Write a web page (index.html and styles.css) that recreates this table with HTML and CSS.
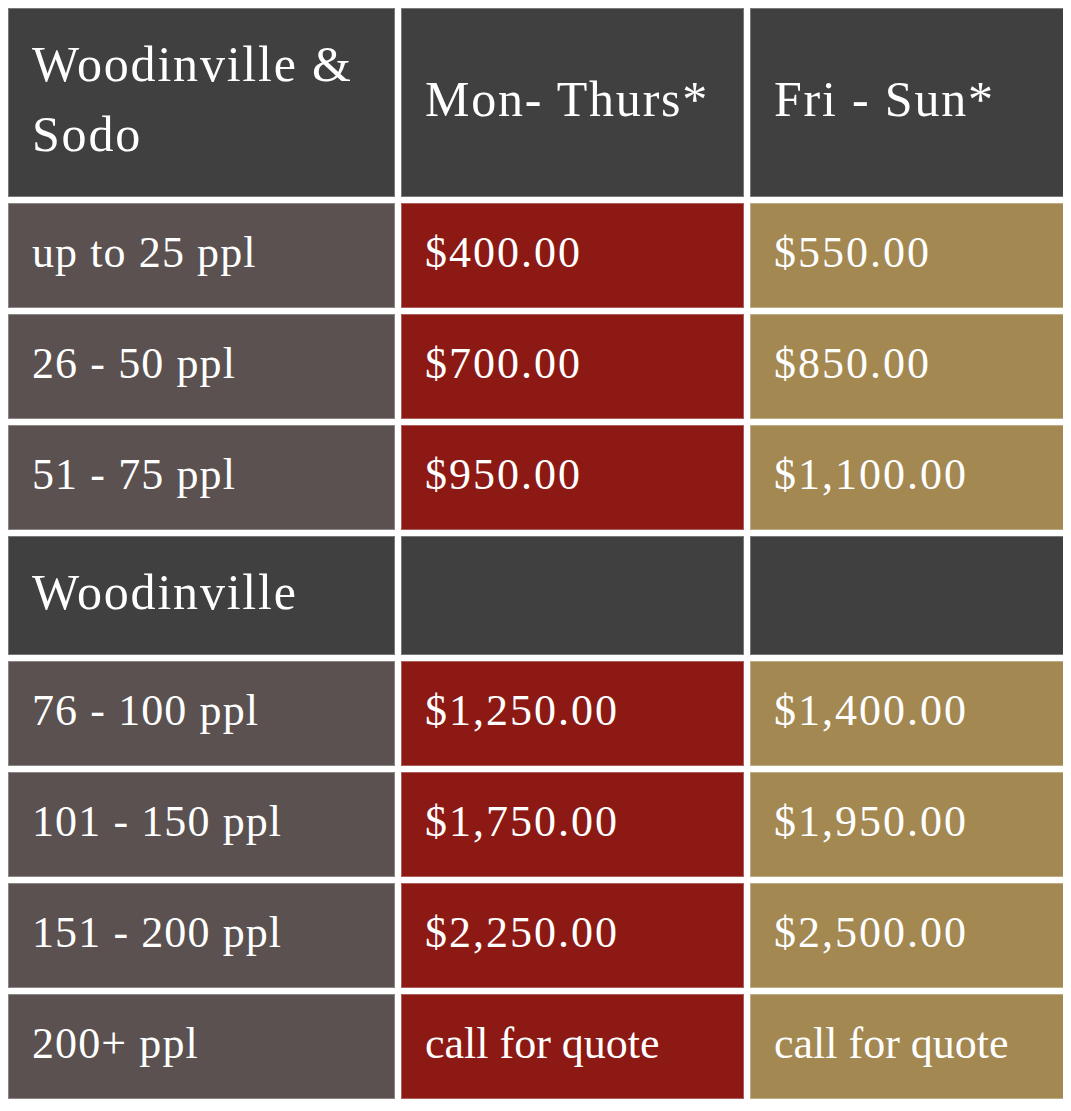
FILE: index.html
```html
<!DOCTYPE html>
<html lang="en">
<head>
<meta charset="utf-8">
<title>Pricing</title>
<link rel="stylesheet" href="styles.css">
</head>
<body>
<div class="price-table">
  <div class="cell head">Woodinville &amp; Sodo</div>
  <div class="cell head">Mon- Thurs*</div>
  <div class="cell head">Fri - Sun*</div>

  <div class="cell label">up to 25 ppl</div>
  <div class="cell weekday">$400.00</div>
  <div class="cell weekend">$550.00</div>

  <div class="cell label">26 - 50 ppl</div>
  <div class="cell weekday">$700.00</div>
  <div class="cell weekend">$850.00</div>

  <div class="cell label">51 - 75 ppl</div>
  <div class="cell weekday">$950.00</div>
  <div class="cell weekend">$1,100.00</div>

  <div class="cell head">Woodinville</div>
  <div class="cell head"></div>
  <div class="cell head"></div>

  <div class="cell label">76 - 100 ppl</div>
  <div class="cell weekday">$1,250.00</div>
  <div class="cell weekend">$1,400.00</div>

  <div class="cell label">101 - 150 ppl</div>
  <div class="cell weekday">$1,750.00</div>
  <div class="cell weekend">$1,950.00</div>

  <div class="cell label">151 - 200 ppl</div>
  <div class="cell weekday">$2,250.00</div>
  <div class="cell weekend">$2,500.00</div>

  <div class="cell label">200+ ppl</div>
  <div class="cell weekday quote">call for quote</div>
  <div class="cell weekend quote">call for quote</div>
</div>
</body>
</html>
```

FILE: styles.css
```css
html, body {
  background: #ffffff;
}
body {
  margin: 8px;
  font-family: "Liberation Serif", "Times New Roman", serif;
}
.price-table {
  display: grid;
  grid-template-columns: 387px 343px 317px;
  grid-template-rows: 189px 105px 105px 105px 119px 105px 105px 105px 105px;
  gap: 6px;
  width: 1059px;
}
.cell {
  display: flex;
  align-items: center;
  padding: 0 20px 5px 24px;
  color: #ffffff;
  font-size: 44px;
  letter-spacing: 2px;
  line-height: 1.2;
  box-shadow: inset 0 0 0 1px rgba(255, 255, 255, 0.3);
  box-sizing: border-box;
}
.head {
  background: #404040;
  font-size: 50px;
  letter-spacing: 1.8px;
  line-height: 70px;
  padding-bottom: 7px;
}
.label {
  background: #5a5150;
  letter-spacing: 1.1px;
}
.weekday {
  background: #8c1914;
}
.weekend {
  background: #a38852;
}
.quote {
  letter-spacing: 0;
}
```
